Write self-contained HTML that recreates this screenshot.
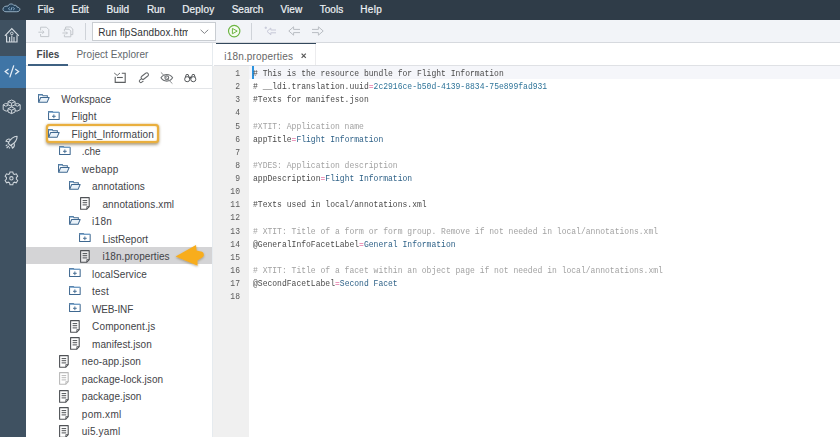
<!DOCTYPE html>
<html><head><meta charset="utf-8"><title>SAP Web IDE</title>
<style>
*{box-sizing:border-box;margin:0;padding:0}
html,body{width:840px;height:437px;overflow:hidden;background:#fff;font-family:"Liberation Sans",sans-serif}
.abs,.ic{position:absolute}
#hdr{position:absolute;left:0;top:0;width:840px;height:19.5px;background:#2f3c48}
.m{position:absolute;top:2.9px;font-size:10px;color:#eef2f5;line-height:13px;white-space:nowrap;-webkit-text-stroke:0.2px #eef2f5}
#side{position:absolute;left:0;top:19.5px;width:25.6px;height:418px;background:#3f5161}
#tb{position:absolute;left:25.6px;top:19.5px;width:815px;height:23px;background:#f2f4f8;border-bottom:1px solid #d6d9de}
.t{position:absolute;font-size:10px;color:#32363a;white-space:nowrap;line-height:13px}
.ln{position:absolute;left:214px;width:26px;text-align:right;font-family:"Liberation Mono",monospace;font-size:8.8px;color:#5a5a5a;line-height:13px;transform:scaleX(.9135);transform-origin:right center}
.cl{position:absolute;left:252.6px;font-family:"Liberation Mono",monospace;font-size:8.8px;line-height:13px;white-space:pre;color:#444;transform:scaleX(.9135);transform-origin:left center}
.c{color:#a2a2a2}.k{color:#d8367c}.v{color:#2f6288}.v2{color:#2e7499}.d{color:#4a4a4a}
</style></head><body>
<div id="hdr"><span class="m" style="left:37.4px;letter-spacing:0.169px">File</span><span class="m" style="left:71.5px;letter-spacing:0.041px">Edit</span><span class="m" style="left:106.5px;letter-spacing:0.09px">Build</span><span class="m" style="left:146.9px;letter-spacing:-0.053px">Run</span><span class="m" style="left:182.2px;letter-spacing:0.177px">Deploy</span><span class="m" style="left:231.7px;letter-spacing:0.002px">Search</span><span class="m" style="left:280.5px;letter-spacing:0.075px">View</span><span class="m" style="left:319.8px;letter-spacing:0.008px">Tools</span><span class="m" style="left:360.3px;letter-spacing:0.28px">Help</span>
<svg class="ic" style="left:2.2px;top:3.4px" width="19" height="9.6" viewBox="0 0 20 11" preserveAspectRatio="none"><path d="M4.2 10 H15.6 C17.6 10 18.8 8.8 18.8 7.3 C18.8 5.8 17.6 4.8 16 4.8 C15.6 2.6 13.8 2.2 12.6 2.8 C11.6 0.6 7.4 0.2 6.2 3.6 C3.4 3.2 1 4.6 1 7.2 C1 8.8 2.4 10 4.2 10 Z" fill="#28445c" stroke="#9db6ca" stroke-width="1"/><path d="M8.2 5.2 L6.8 6.6 L8.2 8 M11.8 5.2 L13.2 6.6 L11.8 8 M10.6 4.8 L9.4 8.4" fill="none" stroke="#9fc6e6" stroke-width="0.9"/></svg>
</div>
<div id="side">
<div class="abs" style="left:0;top:36px;width:25.6px;height:32.8px;background:#3f75a6"></div>
</div>
<!-- sidebar icons (page coords) -->
<svg class="ic" style="left:4px;top:27px" width="16" height="16" viewBox="0 0 16 16"><path d="M0.9 8.8 L7.8 1.6 L14.8 8.8" fill="none" stroke="#d3dae0" stroke-width="1.2"/><path d="M2.6 8.2 V15 H13 V8.2" fill="none" stroke="#d3dae0" stroke-width="1.2"/><circle cx="7.8" cy="6.4" r="1.3" fill="none" stroke="#d3dae0" stroke-width="1"/><path d="M5.6 10 V15 M10 10 V15 M7.8 8.4 V15" fill="none" stroke="#d3dae0" stroke-width="1.1"/></svg>
<svg class="ic" style="left:4px;top:64px" width="16" height="15" viewBox="0 0 16 15"><path d="M4.6 5 L1.2 7.6 L4.6 10.2 M11.2 5 L14.6 7.6 L11.2 10.2 M9.8 1.4 L5.8 13.4" fill="none" stroke="#e6eef6" stroke-width="1.3"/></svg>
<svg class="ic" style="left:0px;top:96px" width="26" height="22" viewBox="0 96 26 22"><g fill="none" stroke="#cdd4da" stroke-width="1" stroke-linejoin="round"><path d="M11.6 100 L15.1 101.6 V104.8 L11.6 106.4 L8 104.8 V101.6 Z M8 101.6 L11.6 103.2 L15.1 101.6 M11.6 103.2 V106.4"/><path d="M11.6 107 L15.1 108.6 V112 L11.6 113.6 L8 112 V108.6 Z M8 108.6 L11.6 110.2 L15.1 108.6 M11.6 110.2 V113.6"/><path d="M8 104.2 L5.6 103.4 L3.2 104.8 V109.6 L6.2 111.2 L8 110.4 M3.2 104.8 L5.8 106.2 L8 105.4"/><path d="M15.2 104.2 L17.6 103.4 L20.2 104.8 V109.6 L17 111.2 L15.2 110.4 M20.2 104.8 L17.4 106.2 L15.2 105.4"/></g></svg>
<svg class="ic" style="left:0px;top:130px" width="26" height="24" viewBox="0 130 26 24"><g fill="none" stroke="#cfd6dc" stroke-width="1.1" stroke-linejoin="round"><path d="M17.1 136.2 C14.2 136.3 10.6 138.6 8.2 143.2 L10.4 145.6 C15 143 17.2 139.4 17.1 136.2 Z"/><path d="M10.6 139.4 C8.8 138.6 6.8 139.2 5.9 141.2 L8.9 142"/><path d="M13.8 143 C14.8 144.8 14.2 147 12.4 148.2 L11.4 145"/><path d="M7.4 144.6 L5.8 146.2 M8.8 146 L6.6 148.2 M10 147.4 L9 148.4"/></g></svg>
<svg class="ic" style="left:4.4px;top:171px" width="15" height="15" viewBox="0 0 16 16"><g fill="none" stroke="#cfd6dc" stroke-width="1.1"><path d="M6.4 1 H9.4 L9.9 3 L11.2 3.7 L13.1 3 L14.6 5.5 L13.2 7 V8.6 L14.6 10.1 L13.1 12.6 L11.2 11.9 L9.9 12.6 L9.4 14.6 H6.4 L5.9 12.6 L4.6 11.9 L2.7 12.6 L1.2 10.1 L2.6 8.6 V7 L1.2 5.5 L2.7 3 L4.6 3.7 L5.9 3 Z"/><circle cx="7.9" cy="7.8" r="1.8"/></g></svg>

<div id="tb"></div>
<!-- toolbar icons -->
<svg class="ic" style="left:38px;top:26px" width="12" height="12" viewBox="0 0 12 12"><g fill="none" stroke="#c3c7cc" stroke-width="1"><path d="M2.6 4.4 V1.2 H8.4 L10.8 3.6 V10.6 H2.6 V8"/><path d="M0.4 6.2 H6 M4.4 4.6 L6 6.2 L4.4 7.8"/></g></svg>
<svg class="ic" style="left:61.5px;top:26px" width="12" height="12" viewBox="0 0 12 12"><g fill="none" stroke="#c3c7cc" stroke-width="1"><path d="M3.6 3 V1 H8.6 L10.8 3 V8.6 H9"/><path d="M2.4 5.4 V3.2 H7 L8.8 5 V10.8 H2.4 V8.6"/><path d="M0.4 7 H5.4 M4 5.6 L5.4 7 L4 8.4"/></g></svg>
<div class="abs" style="left:84.5px;top:22.5px;width:1px;height:17px;background:#cfd3d9"></div>
<div class="abs" style="left:92px;top:22px;width:124px;height:18.5px;background:#fff;border:1px solid #c9cdd2"></div>
<div class="t" id="runtxt" style="left:98.2px;top:25.5px;width:89.7px;overflow:hidden;color:#303336;letter-spacing:0.09px">Run flpSandbox.html</div>
<svg class="ic" style="left:199.5px;top:29px" width="9" height="6" viewBox="0 0 9 6"><path d="M0.6 0.8 L4.4 4.4 L8.2 0.8" fill="none" stroke="#808387" stroke-width="1"/></svg>
<svg class="ic" style="left:226.5px;top:24px" width="15" height="15" viewBox="0 0 15 15"><circle cx="7.2" cy="7.1" r="5.7" fill="#f6fbf2" stroke="#6cb543" stroke-width="1.15"/><path d="M5.4 4.4 L10.2 7.1 L5.4 9.8 Z" fill="none" stroke="#6cb543" stroke-width="1" stroke-linejoin="round"/></svg>
<div class="abs" style="left:251px;top:22.5px;width:1px;height:17px;background:#cfd3d9"></div>
<svg class="ic" style="left:264px;top:26px" width="13" height="10" viewBox="0 0 13 10"><g fill="none" stroke="#c7c8d8" stroke-width="1"><path d="M3 5.4 L6.8 2 V4 H12 M12 6.8 H6.8 V8.8 L3 5.4"/><path d="M0.6 1.8 H3 M1.8 0.6 V3"/></g></svg>
<svg class="ic" style="left:288px;top:26px" width="13" height="10" viewBox="0 0 13 10"><g fill="none" stroke="#b9bdc3" stroke-width="1"><path d="M0.8 5 L5.6 0.8 V3.4 H12 M12 6.6 H5.6 V9.2 L0.8 5"/></g></svg>
<svg class="ic" style="left:310.5px;top:26px" width="13" height="10" viewBox="0 0 13 10"><g fill="none" stroke="#b9bdc3" stroke-width="1"><path d="M12.2 5 L7.4 0.8 V3.4 H1 M1 6.6 H7.4 V9.2 L12.2 5"/></g></svg>

<!-- left panel -->
<div class="abs" style="left:212px;top:43px;width:1px;height:394px;background:#e6ebef"></div>
<div class="t" id="files" style="left:36.6px;top:48px;font-weight:bold;color:#43474b;letter-spacing:-0.019px">Files</div>
<div class="t" id="pe" style="left:76.4px;top:48px;color:#62666a;letter-spacing:0.06px">Project Explorer</div>
<div class="abs" style="left:25.6px;top:65px;width:186.4px;height:1px;background:#dfe2e5"></div>
<div class="abs" style="left:27.8px;top:64.3px;width:40px;height:2px;background:#3f6182"></div>
<div class="abs" style="left:25.6px;top:88.3px;width:186.4px;height:1px;background:#e3e5e8"></div>
<!-- files toolbar icons -->
<svg class="ic" style="left:110px;top:68px" width="90" height="20" viewBox="110 68 90 20"><g fill="none" stroke-linecap="butt">
<path d="M114.2 73 L117.2 75.4 L120 73" stroke="#6a6d70" stroke-width="1"/>
<path d="M121.8 73.3 H125.2 V82.4 H115.2 V76.8" stroke="#5c5f62" stroke-width="1.1"/>
<path d="M117 77.5 H122.8" stroke="#5c5f62" stroke-width="1.1"/>
<g stroke="#66696c" stroke-width="1.05"><rect x="140.6" y="74.4" width="8.4" height="3.5" rx="1.75" transform="rotate(-38 144.8 76.15)"/>
<path d="M142.2 78.2 L140 79.9 C138.3 81.3 140.2 83.4 141.8 82.2 L143.4 81"/></g>
<path d="M161 77.8 C163.6 73.4 170 73.4 172.6 77.8 C170 82.2 163.6 82.2 161 77.8 Z" stroke="#6d7073" stroke-width="1.1"/>
<circle cx="166.8" cy="77.8" r="1.9" stroke="#6d7073" stroke-width="1.1"/>
<path d="M160.9 72.4 L172.4 83.6" stroke="#8a8d90" stroke-width="1"/>
<g stroke="#56595c" stroke-width="1" stroke-linejoin="round"><circle cx="187.2" cy="79.2" r="2.55"/><circle cx="193.3" cy="79.2" r="2.55"/>
<path d="M185.3 77.4 L186.3 74.5 H188.1 L189.1 77.4 M191.4 77.4 L192.4 74.5 H194.2 L195.2 77.4"/>
<path d="M189.3 77.6 H191.2" stroke-width="1.9" stroke="#4a4d50"/></g>
</g></svg>

<svg class="ic" style="left:37.8px;top:93.9px" width="11.9" height="9.1" viewBox="0 0 13 10" preserveAspectRatio="none"><path d="M0.6 9.2 V0.6 H4.6 L5.4 1.9 H10.2 V3.6" fill="none" stroke="#3f6890" stroke-width="1.1"/><path d="M0.7 9.2 L2.9 3.8 H12.2 L9.9 9.2 Z" fill="#eaf2f9" stroke="#3f6890" stroke-width="1.1" stroke-linejoin="round"/><path d="M0.6 1.2 H4.8" stroke="#6f9dc6" stroke-width="1.2"/></svg><div class="t tr" style="left:61.2px;top:92.9px;letter-spacing:-0.005px;color:#3f4347">Workspace</div><svg class="ic" style="left:48.2px;top:110.7px" width="12.1" height="9.3" viewBox="0 0 13 10" preserveAspectRatio="none"><path d="M0.6 0.6 H4.8 L5.4 1.6 H12 V9.2 H0.6 Z" fill="#fff" stroke="#3f6890" stroke-width="1.1" stroke-linejoin="round"/><path d="M0.6 1.3 H12" stroke="#7aa5cc" stroke-width="1.4"/><path d="M4.3 5.7 H8.3 M6.3 3.7 V7.7" stroke="#3f6890" stroke-width="1"/></svg><div class="t tr" style="left:71.5px;top:110.4px;letter-spacing:0.091px;color:#3f4347">Flight</div><div style="position:absolute;left:45.5px;top:124.2px;width:113.8px;height:18.4px;border:2px solid #e9af3e;border-radius:3.5px;box-shadow:0 0 1.5px rgba(233,175,62,.9),inset 0 0 1.5px rgba(233,175,62,.9),0 1.5px 3px rgba(90,70,30,.5);background:#fff"></div><svg class="ic" style="left:48.1px;top:128.9px" width="11.9" height="9.1" viewBox="0 0 13 10" preserveAspectRatio="none"><path d="M0.6 9.2 V0.6 H4.6 L5.4 1.9 H10.2 V3.6" fill="none" stroke="#3f6890" stroke-width="1.1"/><path d="M0.7 9.2 L2.9 3.8 H12.2 L9.9 9.2 Z" fill="#eaf2f9" stroke="#3f6890" stroke-width="1.1" stroke-linejoin="round"/><path d="M0.6 1.2 H4.8" stroke="#6f9dc6" stroke-width="1.2"/></svg><div class="t tr" style="left:71.5px;top:127.9px;letter-spacing:0.131px;color:#3f4347">Flight_Information</div><svg class="ic" style="left:58.5px;top:145.7px" width="12.1" height="9.3" viewBox="0 0 13 10" preserveAspectRatio="none"><path d="M0.6 0.6 H4.8 L5.4 1.6 H12 V9.2 H0.6 Z" fill="#fff" stroke="#3f6890" stroke-width="1.1" stroke-linejoin="round"/><path d="M0.6 1.3 H12" stroke="#7aa5cc" stroke-width="1.4"/><path d="M4.3 5.7 H8.3 M6.3 3.7 V7.7" stroke="#3f6890" stroke-width="1"/></svg><div class="t tr" style="left:81.8px;top:145.4px;letter-spacing:-0.077px;color:#3f4347">.che</div><svg class="ic" style="left:58.4px;top:163.9px" width="11.9" height="9.1" viewBox="0 0 13 10" preserveAspectRatio="none"><path d="M0.6 9.2 V0.6 H4.6 L5.4 1.9 H10.2 V3.6" fill="none" stroke="#3f6890" stroke-width="1.1"/><path d="M0.7 9.2 L2.9 3.8 H12.2 L9.9 9.2 Z" fill="#eaf2f9" stroke="#3f6890" stroke-width="1.1" stroke-linejoin="round"/><path d="M0.6 1.2 H4.8" stroke="#6f9dc6" stroke-width="1.2"/></svg><div class="t tr" style="left:81.8px;top:162.9px;letter-spacing:0.295px;color:#3f4347">webapp</div><svg class="ic" style="left:68.7px;top:181.4px" width="11.9" height="9.1" viewBox="0 0 13 10" preserveAspectRatio="none"><path d="M0.6 9.2 V0.6 H4.6 L5.4 1.9 H10.2 V3.6" fill="none" stroke="#3f6890" stroke-width="1.1"/><path d="M0.7 9.2 L2.9 3.8 H12.2 L9.9 9.2 Z" fill="#eaf2f9" stroke="#3f6890" stroke-width="1.1" stroke-linejoin="round"/><path d="M0.6 1.2 H4.8" stroke="#6f9dc6" stroke-width="1.2"/></svg><div class="t tr" style="left:92.1px;top:180.4px;letter-spacing:0.107px;color:#3f4347">annotations</div><svg class="ic" style="left:80px;top:197.4px" width="10" height="13" viewBox="0 0 10 13"><path d="M0.6 0.6 H9.2 V9.6 L6.8 12.2 H0.6 Z" fill="#fff" stroke="#4f5256" stroke-width="1.1" stroke-linejoin="round"/><path d="M2.6 3.6 H7.2 M2.6 5.7 H7.2 M2.6 7.9 H7.2" stroke="#4f5256" stroke-width="1"/><path d="M6.8 12.2 V9.6 H9.2" fill="none" stroke="#4f5256" stroke-width="0.8"/></svg><div class="t tr" style="left:102.4px;top:197.9px;letter-spacing:0.117px;color:#3f4347">annotations.xml</div><svg class="ic" style="left:68.7px;top:216.4px" width="11.9" height="9.1" viewBox="0 0 13 10" preserveAspectRatio="none"><path d="M0.6 9.2 V0.6 H4.6 L5.4 1.9 H10.2 V3.6" fill="none" stroke="#3f6890" stroke-width="1.1"/><path d="M0.7 9.2 L2.9 3.8 H12.2 L9.9 9.2 Z" fill="#eaf2f9" stroke="#3f6890" stroke-width="1.1" stroke-linejoin="round"/><path d="M0.6 1.2 H4.8" stroke="#6f9dc6" stroke-width="1.2"/></svg><div class="t tr" style="left:92.1px;top:215.4px;letter-spacing:0.273px;color:#3f4347">i18n</div><svg class="ic" style="left:79.1px;top:233.2px" width="12.1" height="9.3" viewBox="0 0 13 10" preserveAspectRatio="none"><path d="M0.6 0.6 H4.8 L5.4 1.6 H12 V9.2 H0.6 Z" fill="#fff" stroke="#3f6890" stroke-width="1.1" stroke-linejoin="round"/><path d="M0.6 1.3 H12" stroke="#7aa5cc" stroke-width="1.4"/><path d="M4.3 5.7 H8.3 M6.3 3.7 V7.7" stroke="#3f6890" stroke-width="1"/></svg><div class="t tr" style="left:102.4px;top:232.9px;letter-spacing:0.012px;color:#3f4347">ListReport</div><div style="position:absolute;left:25.6px;top:247.2px;width:186.2px;height:17.2px;background:#d4d4d6"></div><svg class="ic" style="left:80px;top:249.9px" width="10" height="13" viewBox="0 0 10 13"><path d="M0.6 0.6 H9.2 V9.6 L6.8 12.2 H0.6 Z" fill="#e9e9ea" stroke="#4f5256" stroke-width="1.1" stroke-linejoin="round"/><path d="M2.6 3.6 H7.2 M2.6 5.7 H7.2 M2.6 7.9 H7.2" stroke="#4f5256" stroke-width="1"/><path d="M6.8 12.2 V9.6 H9.2" fill="none" stroke="#4f5256" stroke-width="0.8"/></svg><div class="t tr" style="left:102.4px;top:250.4px;letter-spacing:0.076px;color:#3f4347">i18n.properties</div><svg class="ic" style="left:68.8px;top:268.2px" width="12.1" height="9.3" viewBox="0 0 13 10" preserveAspectRatio="none"><path d="M0.6 0.6 H4.8 L5.4 1.6 H12 V9.2 H0.6 Z" fill="#fff" stroke="#3f6890" stroke-width="1.1" stroke-linejoin="round"/><path d="M0.6 1.3 H12" stroke="#7aa5cc" stroke-width="1.4"/><path d="M4.3 5.7 H8.3 M6.3 3.7 V7.7" stroke="#3f6890" stroke-width="1"/></svg><div class="t tr" style="left:92.1px;top:267.9px;letter-spacing:0.073px;color:#3f4347">localService</div><svg class="ic" style="left:68.8px;top:285.7px" width="12.1" height="9.3" viewBox="0 0 13 10" preserveAspectRatio="none"><path d="M0.6 0.6 H4.8 L5.4 1.6 H12 V9.2 H0.6 Z" fill="#fff" stroke="#3f6890" stroke-width="1.1" stroke-linejoin="round"/><path d="M0.6 1.3 H12" stroke="#7aa5cc" stroke-width="1.4"/><path d="M4.3 5.7 H8.3 M6.3 3.7 V7.7" stroke="#3f6890" stroke-width="1"/></svg><div class="t tr" style="left:92.1px;top:285.4px;letter-spacing:0.194px;color:#3f4347">test</div><svg class="ic" style="left:68.8px;top:303.2px" width="12.1" height="9.3" viewBox="0 0 13 10" preserveAspectRatio="none"><path d="M0.6 0.6 H4.8 L5.4 1.6 H12 V9.2 H0.6 Z" fill="#fff" stroke="#3f6890" stroke-width="1.1" stroke-linejoin="round"/><path d="M0.6 1.3 H12" stroke="#7aa5cc" stroke-width="1.4"/><path d="M4.3 5.7 H8.3 M6.3 3.7 V7.7" stroke="#3f6890" stroke-width="1"/></svg><div class="t tr" style="left:92.1px;top:302.9px;letter-spacing:-0.174px;color:#3f4347">WEB-INF</div><svg class="ic" style="left:69.7px;top:319.9px" width="10" height="13" viewBox="0 0 10 13"><path d="M0.6 0.6 H9.2 V9.6 L6.8 12.2 H0.6 Z" fill="#fff" stroke="#4f5256" stroke-width="1.1" stroke-linejoin="round"/><path d="M2.6 3.6 H7.2 M2.6 5.7 H7.2 M2.6 7.9 H7.2" stroke="#4f5256" stroke-width="1"/><path d="M6.8 12.2 V9.6 H9.2" fill="none" stroke="#4f5256" stroke-width="0.8"/></svg><div class="t tr" style="left:92.1px;top:320.4px;letter-spacing:0.125px;color:#3f4347">Component.js</div><svg class="ic" style="left:69.7px;top:337.4px" width="10" height="13" viewBox="0 0 10 13"><path d="M0.6 0.6 H9.2 V9.6 L6.8 12.2 H0.6 Z" fill="#fff" stroke="#4f5256" stroke-width="1.1" stroke-linejoin="round"/><path d="M2.6 3.6 H7.2 M2.6 5.7 H7.2 M2.6 7.9 H7.2" stroke="#4f5256" stroke-width="1"/><path d="M6.8 12.2 V9.6 H9.2" fill="none" stroke="#4f5256" stroke-width="0.8"/></svg><div class="t tr" style="left:92.1px;top:337.9px;letter-spacing:0.06px;color:#3f4347">manifest.json</div><svg class="ic" style="left:59.4px;top:354.9px" width="10" height="13" viewBox="0 0 10 13"><path d="M0.6 0.6 H9.2 V9.6 L6.8 12.2 H0.6 Z" fill="#fff" stroke="#4f5256" stroke-width="1.1" stroke-linejoin="round"/><path d="M2.6 3.6 H7.2 M2.6 5.7 H7.2 M2.6 7.9 H7.2" stroke="#4f5256" stroke-width="1"/><path d="M6.8 12.2 V9.6 H9.2" fill="none" stroke="#4f5256" stroke-width="0.8"/></svg><div class="t tr" style="left:81.8px;top:355.4px;letter-spacing:0.114px;color:#3f4347">neo-app.json</div><svg class="ic" style="left:59.4px;top:372.4px" width="10" height="13" viewBox="0 0 10 13"><path d="M0.6 0.6 H9.2 V9.6 L6.8 12.2 H0.6 Z" fill="#fff" stroke="#b9b9b9" stroke-width="1.1" stroke-linejoin="round"/><path d="M2.6 3.6 H7.2 M2.6 5.7 H7.2 M2.6 7.9 H7.2" stroke="#b9b9b9" stroke-width="1"/><path d="M6.8 12.2 V9.6 H9.2" fill="none" stroke="#b9b9b9" stroke-width="0.8"/></svg><div class="t tr" style="left:81.8px;top:372.9px;letter-spacing:0.08px;color:#3f4347">package-lock.json</div><svg class="ic" style="left:59.4px;top:389.9px" width="10" height="13" viewBox="0 0 10 13"><path d="M0.6 0.6 H9.2 V9.6 L6.8 12.2 H0.6 Z" fill="#fff" stroke="#4f5256" stroke-width="1.1" stroke-linejoin="round"/><path d="M2.6 3.6 H7.2 M2.6 5.7 H7.2 M2.6 7.9 H7.2" stroke="#4f5256" stroke-width="1"/><path d="M6.8 12.2 V9.6 H9.2" fill="none" stroke="#4f5256" stroke-width="0.8"/></svg><div class="t tr" style="left:81.8px;top:390.4px;letter-spacing:0.064px;color:#3f4347">package.json</div><svg class="ic" style="left:59.4px;top:407.4px" width="10" height="13" viewBox="0 0 10 13"><path d="M0.6 0.6 H9.2 V9.6 L6.8 12.2 H0.6 Z" fill="#fff" stroke="#4f5256" stroke-width="1.1" stroke-linejoin="round"/><path d="M2.6 3.6 H7.2 M2.6 5.7 H7.2 M2.6 7.9 H7.2" stroke="#4f5256" stroke-width="1"/><path d="M6.8 12.2 V9.6 H9.2" fill="none" stroke="#4f5256" stroke-width="0.8"/></svg><div class="t tr" style="left:81.8px;top:407.9px;letter-spacing:0.272px;color:#3f4347">pom.xml</div><svg class="ic" style="left:59.4px;top:424.9px" width="10" height="13" viewBox="0 0 10 13"><path d="M0.6 0.6 H9.2 V9.6 L6.8 12.2 H0.6 Z" fill="#fff" stroke="#4f5256" stroke-width="1.1" stroke-linejoin="round"/><path d="M2.6 3.6 H7.2 M2.6 5.7 H7.2 M2.6 7.9 H7.2" stroke="#4f5256" stroke-width="1"/><path d="M6.8 12.2 V9.6 H9.2" fill="none" stroke="#4f5256" stroke-width="0.8"/></svg><div class="t tr" style="left:81.8px;top:425.4px;letter-spacing:0.156px;color:#3f4347">ui5.yaml</div>
<!-- orange arrow -->
<svg class="ic" style="left:172px;top:242px" width="36" height="28" viewBox="0 0 36 28"><defs><filter id="sh" x="-20%" y="-20%" width="140%" height="150%"><feDropShadow dx="0" dy="1" stdDeviation="0.8" flood-color="#5a4a20" flood-opacity="0.45"/></filter></defs><path d="M3.6 14.6 L24 3 L24.6 8.6 L30 9.8 C32.4 10.6 32.4 15 30.2 15.6 L25.4 18.6 L25.6 23.8 Z" fill="#f8ad1f" filter="url(#sh)"/></svg>

<!-- editor -->
<div class="abs" style="left:213.5px;top:43px;width:627px;height:22.5px;background:#fff"></div>
<div class="abs" style="left:213.5px;top:65px;width:627px;height:1px;background:#dfe1e5"></div>
<div class="abs" style="left:215.5px;top:43px;width:100.5px;height:22.2px;background:#fff;border-right:1px solid #ececee"></div>
<div class="abs" style="left:215.5px;top:42.7px;width:100.3px;height:1.8px;background:#33485c"></div>
<div class="t" id="tab" style="left:224.3px;top:50px;font-size:10px;color:#666;letter-spacing:0.176px">i18n.properties</div>
<svg class="ic" style="left:301.3px;top:53.2px" width="6" height="6" viewBox="0 0 6 6"><path d="M0.6 0.6 L4.8 4.8 M4.8 0.6 L0.6 4.8" stroke="#555" stroke-width="1.2"/></svg>
<div class="abs" style="left:212.8px;top:66px;width:36.2px;height:371px;background:#f0f0f0"></div>
<div class="abs" style="left:249px;top:66px;width:591px;height:13.2px;background:#f5f6fa"></div>
<div class="abs" style="left:251.6px;top:66.3px;width:2px;height:13.2px;background:#2a92de"></div>
<div class="ln" style="top:68px">1</div><div class="cl" style="top:68px"><span class="d"># This is the resource bundle for Flight Information</span></div><div class="ln" style="top:81.135px">2</div><div class="cl" style="top:81.135px"><span class="d"># __ldi.translation.uuid</span><span class="k">=</span><span class="v2">2c2916ce-b50d-4139-8834-75e899fad931</span></div><div class="ln" style="top:94.27px">3</div><div class="cl" style="top:94.27px"><span class="d">#Texts for manifest.json</span></div><div class="ln" style="top:107.405px">4</div><div class="ln" style="top:120.54px">5</div><div class="cl" style="top:120.54px"><span class="c">#XTIT: Application name</span></div><div class="ln" style="top:133.675px">6</div><div class="cl" style="top:133.675px"><span class="d">appTitle</span><span class="k">=</span><span class="v">Flight Information</span></div><div class="ln" style="top:146.81px">7</div><div class="ln" style="top:159.945px">8</div><div class="cl" style="top:159.945px"><span class="c">#YDES: Application description</span></div><div class="ln" style="top:173.08px">9</div><div class="cl" style="top:173.08px"><span class="d">appDescription</span><span class="k">=</span><span class="v">Flight Information</span></div><div class="ln" style="top:186.215px">10</div><div class="ln" style="top:199.35px">11</div><div class="cl" style="top:199.35px"><span class="d">#Texts used in local/annotations.xml</span></div><div class="ln" style="top:212.485px">12</div><div class="ln" style="top:225.62px">13</div><div class="cl" style="top:225.62px"><span class="c"># XTIT: Title of a form or form group. Remove if not needed in local/annotations.xml</span></div><div class="ln" style="top:238.755px">14</div><div class="cl" style="top:238.755px"><span class="d">@GeneralInfoFacetLabel</span><span class="k">=</span><span class="v">General Information</span></div><div class="ln" style="top:251.89px">15</div><div class="ln" style="top:265.025px">16</div><div class="cl" style="top:265.025px"><span class="c"># XTIT: Title of a facet within an object page if not needed in local/annotations.xml</span></div><div class="ln" style="top:278.16px">17</div><div class="cl" style="top:278.16px"><span class="d">@SecondFacetLabel</span><span class="k">=</span><span class="v">Second Facet</span></div><div class="ln" style="top:291.295px">18</div>
</body></html>
